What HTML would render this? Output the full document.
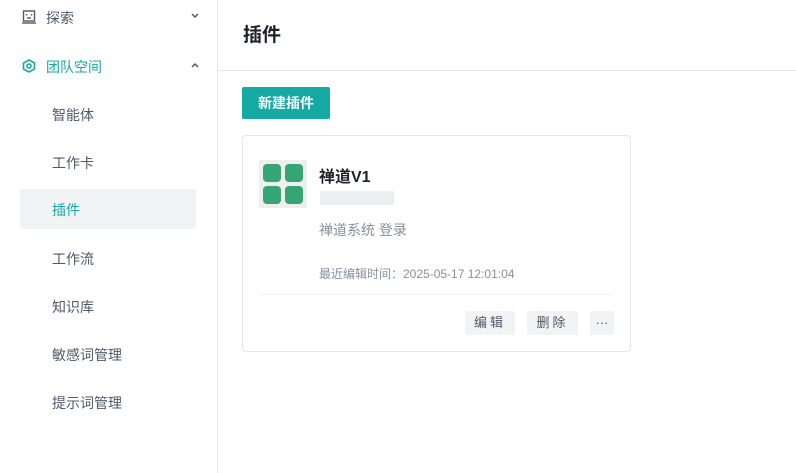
<!DOCTYPE html>
<html><head><meta charset="utf-8"><style>
body{margin:0;width:796px;height:473px;background:#fff;font-family:"Liberation Sans","Noto Sans CJK SC",sans-serif;position:relative;overflow:hidden}
.a{position:absolute}
.side{left:0;top:0;width:217px;height:473px;border-right:1px solid #e5e6eb}
.it{position:absolute;left:52px;font-size:14px;color:#4e5969}
.btn{position:absolute;background:#f2f3f5;border-radius:2px;font-size:13px;color:#4e5969;text-align:center;line-height:24px;height:24px;letter-spacing:3px}
</style></head><body>
<div class="a side">
<svg class="a" style="left:22px;top:10px" width="14" height="14" viewBox="0 0 14 14" fill="none" stroke="#4e5969" stroke-width="1.4"><rect x="1.5" y="1" width="11" height="10"/><line x1="0" y1="13" x2="14" y2="13"/><line x1="4.5" y1="4" x2="4.5" y2="5.5"/><line x1="9.5" y1="4" x2="9.5" y2="5.5"/><line x1="5" y1="8" x2="9" y2="8"/></svg>
<div class="it" style="left:46px;top:8px">探索</div>
<svg class="a" style="left:190px;top:12px" width="10" height="8"><path d="M2 2l3 3 3-3" stroke="#4e5969" stroke-width="1.5" fill="none"/></svg>
<svg class="a" style="left:22px;top:59px" width="14" height="14" viewBox="0 0 14 14" fill="none" stroke="#14a9a3" stroke-width="1.6"><path d="M7 1l5.5 3v6L7 13 1.5 10V4z"/><circle cx="7" cy="7" r="2"/></svg>
<div class="it" style="left:46px;top:57px;color:#14a9a3">团队空间</div>
<svg class="a" style="left:190px;top:61px" width="10" height="8"><path d="M2 6l3-3 3 3" stroke="#4e5969" stroke-width="1.5" fill="none"/></svg>
<div class="it" style="top:105px">智能体</div>
<div class="it" style="top:153px">工作卡</div>
<div class="a" style="left:20px;top:189px;width:176px;height:40px;background:#f2f3f5;border-radius:2px"></div>
<div class="it" style="top:200px;color:#14a9a3">插件</div>
<div class="it" style="top:249px">工作流</div>
<div class="it" style="top:297px">知识库</div>
<div class="it" style="top:345px">敏感词管理</div>
<div class="it" style="top:393px">提示词管理</div>
</div>
<div class="a" style="left:243px;top:20px;font-size:19px;font-weight:bold;color:#1d2129">插件</div>
<div class="a" style="left:218px;top:70px;width:578px;height:1px;background:#e5e6eb"></div>
<div class="a" style="left:242px;top:87px;width:88px;height:32px;background:#14a9a3;border-radius:2px;color:#fff;font-size:14px;font-weight:bold;text-align:center;line-height:32px">新建插件</div>
<div class="a" style="left:242px;top:135px;width:387px;height:215px;border:1px solid #e5e6eb;border-radius:4px"></div>
<div class="a" style="left:259px;top:160px;width:48px;height:48px;background:#eee;border-radius:2px"></div>
<div class="a" style="left:263px;top:164px;width:18px;height:18px;background:#35a673;border-radius:4px"></div>
<div class="a" style="left:285px;top:164px;width:18px;height:18px;background:#35a673;border-radius:4px"></div>
<div class="a" style="left:263px;top:186px;width:18px;height:18px;background:#35a673;border-radius:4px"></div>
<div class="a" style="left:285px;top:186px;width:18px;height:18px;background:#35a673;border-radius:4px"></div>
<div class="a" style="left:319px;top:163px;font-size:16px;font-weight:bold;color:#1d2129">禅道V1</div>
<div class="a" style="left:320px;top:191px;width:74px;height:14px;background:#eceef2"></div>
<div class="a" style="left:319px;top:220px;font-size:14px;color:#86909c">禅道系统 登录</div>
<div class="a" style="left:319px;top:265px;font-size:12px;color:#86909c">最近编辑时间：2025-05-17 12:01:04</div>
<div class="a" style="left:259px;top:294px;width:354px;height:1px;background:#eef0f3"></div>
<div class="btn" style="left:465px;top:311px;width:50px">编辑</div>
<div class="btn" style="left:527px;top:311px;width:51px">删除</div>
<div class="btn" style="left:590px;top:311px;width:24px;letter-spacing:0">···</div>
</body></html>
